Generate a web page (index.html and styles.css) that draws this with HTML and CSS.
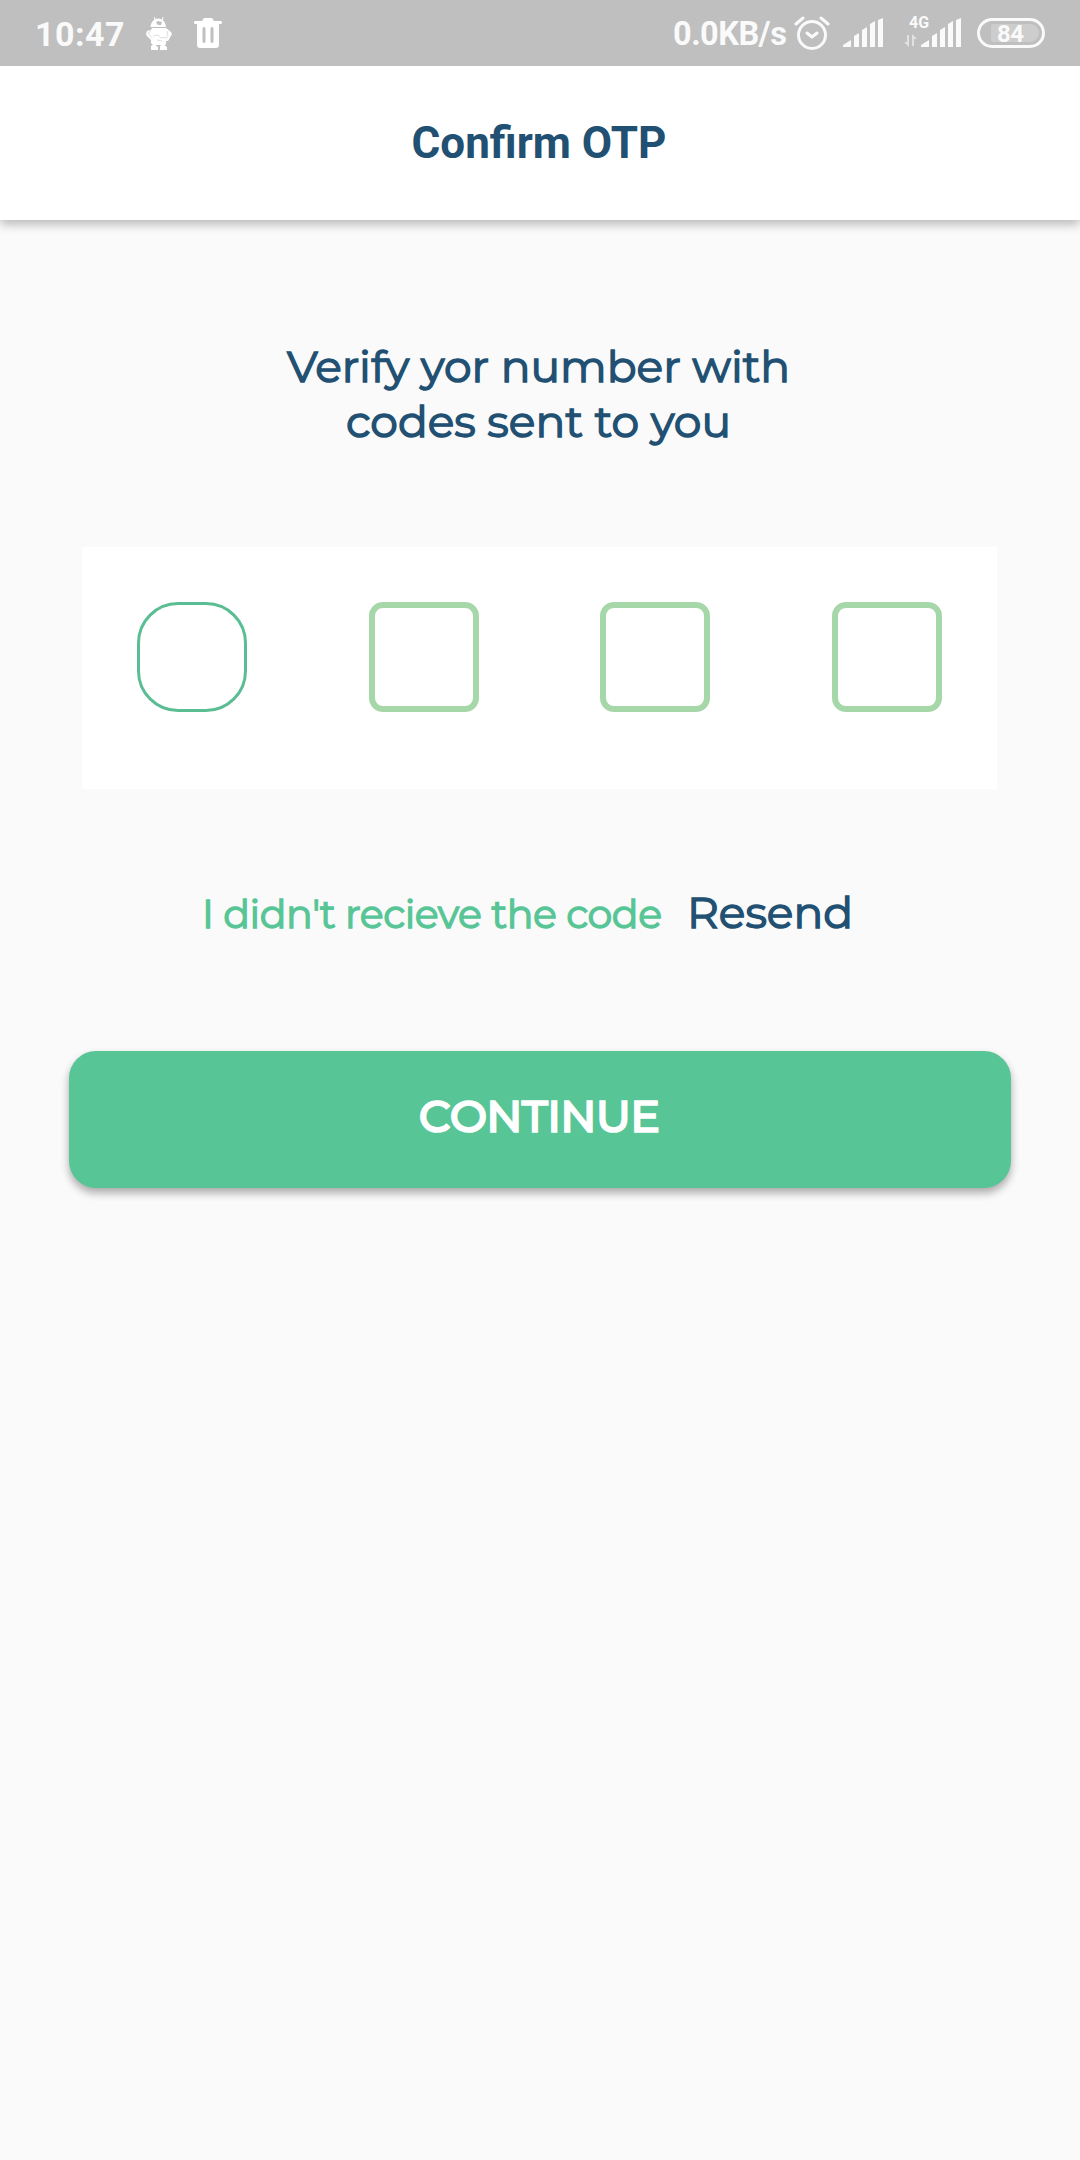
FILE: index.html
```html
<!DOCTYPE html>
<html lang="en">
<head>
<meta charset="utf-8">
<title>Confirm OTP</title>
<link rel="stylesheet" href="styles.css">
</head>
<body>
<div class="status">
  <span class="time">10:47</span>
  <svg class="bot" width="28" height="36" viewBox="0 0 28 36" fill="#fff">
    <path d="M9.500 1l.5 3M18 1l-.5 3" stroke="#fff" stroke-width="1"/>
    <path fill-rule="evenodd" d="M5.500 11C6.500 -.5 20 -.5 21 11ZM11 6.500l2 2.500 3 0 1-3-4-1Z"/>
    <path d="M7 12h14l5 4 1 2-4 7h-2v3l-1 1H8l-2-2v-3l-4-4-1-2 1-3 4-1Z"/>
    <path d="M6 15l-3 2 4 5M8 20l5-1 3 3 5-1M22 15l1 5-2 3M12 24l5 1" fill="none" stroke="#bfbfbf" stroke-width=".5"/>
    <path d="M6 34v-4l3-2 4 3v3ZM15 34v-4l3-2 4 3v3Z"/>
  </svg>
  <svg class="trash" width="30" height="32" viewBox="0 0 30 32" fill="#fff">
    <path d="M11 1h8l2 3h7q1 0 1 1.500T28 7H2Q1 7 1 5.500T2 4h7Z"/>
    <path fill-rule="evenodd" d="M4 6h22v22q0 3-3 3H7q-3 0-3-3ZM9.500 12v12q0 2 1.500 2t1.500-2V12q0-2-1.500-2t-1.500 2Zm8 0v12q0 2 1.500 2t1.500-2V12q0-2-1.500-2t-1.500 2Z"/>
  </svg>
  <span class="speed">0.0KB/s</span>
  <svg class="alarm" width="36" height="36" viewBox="0 0 36 36" fill="none" stroke="#fafafa" stroke-width="3" stroke-linecap="round">
    <circle cx="18" cy="20" r="13.500"/>
    <path d="M13 18l5 4 5-4M2 9l7-6M34 9l-7-6" stroke-linejoin="round"/>
  </svg>
  <svg class="signal" width="41" height="31" viewBox="0 0 41 31" fill="#fafafa">
    <path d="M0 27l8-5v7H0ZM11 18l5-3v14h-5ZM19 12l5-3v20h-5ZM27 6l5-3v26h-5ZM35 2l5-2v29h-5Z"/>
  </svg>
  <div class="mobile">
    <div class="network">
      <span class="gen">4G</span>
      <svg width="14" height="13" viewBox="0 0 14 13" fill="#e2e2e2"><path d="M3 1h2v12L0 8h3ZM8 0l5 5h-3v7H8Z"/></svg>
    </div>
    <svg class="bars" width="41" height="31" viewBox="0 0 41 31" fill="#fafafa">
      <path d="M0 27l8-5v7H0ZM11 18l5-3v14h-5ZM19 12l5-3v20h-5ZM27 6l5-3v26h-5ZM35 2l5-2v29h-5Z"/>
    </svg>
  </div>
  <div class="battery"><span class="charge">84</span></div>
</div>
<header class="appbar"><h1 class="title">Confirm OTP</h1></header>
<main class="content">
  <h2 class="heading">Verify yor number with<br>codes sent to you</h2>
  <div class="panel">
    <div class="cell active"></div>
    <div class="cell"></div>
    <div class="cell"></div>
    <div class="cell"></div>
  </div>
  <p class="resend-row"><span class="hint">I didn't recieve the code</span><a class="resend">Resend</a></p>
  <button class="continue">CONTINUE</button>
</main>
</body>
</html>
```
FILE: styles.css
```css
* { box-sizing: border-box; }
body { margin: 0; width: 1080px; height: 2160px; background: #fafafa; color: #215072; font-family: Montserrat, Inter, sans-serif; overflow: hidden; }
svg { display: block; flex: none; }
.status { position: relative; z-index: 1; height: 66px; padding-left: 35px; background: #bfbfbf; color: #fafafa; display: flex; align-items: flex-start; font-family: Roboto, sans-serif; font-weight: 700; white-space: nowrap; }
.time { width: 110px; font-size: 34px; line-height: 68px; letter-spacing: .5px; }
.bot { margin-top: 16px; }
.trash { margin: 17px 0 0 20px; }
.speed { margin-left: 450px; width: 121px; font-size: 32.500px; line-height: 68px; letter-spacing: -.5px; }
.alarm { margin-top: 15px; }
.signal { margin: 18px 0 0 13px; }
.mobile { margin: 16px 0 0 20px; display: flex; }
.bars { margin-top: 2px; }
.network { width: 17px; height: 31px; display: flex; flex-direction: column; justify-content: space-between; }
.gen { margin-left: 5px; font-size: 16px; line-height: 14px; }
.battery { margin: 18px 0 0 15px; width: 68px; height: 30px; border: 3px solid #fafafa; border-radius: 15px; padding: 3px; }
.charge { display: block; margin-left: 8px; padding-left: 6px; height: 18px; background: #cdcdcd; border-radius: 2px 9px 9px 2px; font-size: 24px; line-height: 20px; letter-spacing: -.5px; }
.appbar { position: relative; height: 154px; background: #fff; box-shadow: 0 4px 10px rgba(0,0,0,.28); display: flex; justify-content: center; }
.title { margin: 0 2px 0 0; font: 700 44px/154px Roboto, sans-serif; }
.content { display: flex; flex-direction: column; align-items: center; padding-top: 119px; }
.heading { margin: 0 3px 0 0; font-size: 44px; line-height: 55px; font-weight: 400; text-align: center; -webkit-text-stroke: 1.4px #215072; }
.panel { width: 915px; height: 242px; margin: 98px 1px 0 0; padding: 55px; background: #fff; display: flex; justify-content: space-between; }
.cell { width: 110px; height: 110px; border: 6px solid #a6d7a9; border-radius: 14px; }
.active { border: 3px solid #5bbd93; border-radius: 41px; }
.resend-row { margin: 93px 0 0; width: 676px; height: 60px; display: flex; line-height: 60px; white-space: nowrap; font-weight: 400; }
.hint { width: 485px; padding-top: 2px; font-size: 39.500px; color: #57c596; letter-spacing: -.5px; -webkit-text-stroke: 1.3px #57c596; }
.resend { font-size: 44px; -webkit-text-stroke: 1.4px #215072; }
.continue { margin-top: 109px; width: 942px; height: 137px; border: 0; border-radius: 27px; background: #57c596; color: #fff; font: 500 44.500px/131px Montserrat, Inter, sans-serif; font-kerning: none; letter-spacing: -.7px; -webkit-text-stroke: 1.7px #fff; padding: 0 2px 6px 0; box-shadow: 0 5px 9px rgba(0,0,0,.32); }
```
